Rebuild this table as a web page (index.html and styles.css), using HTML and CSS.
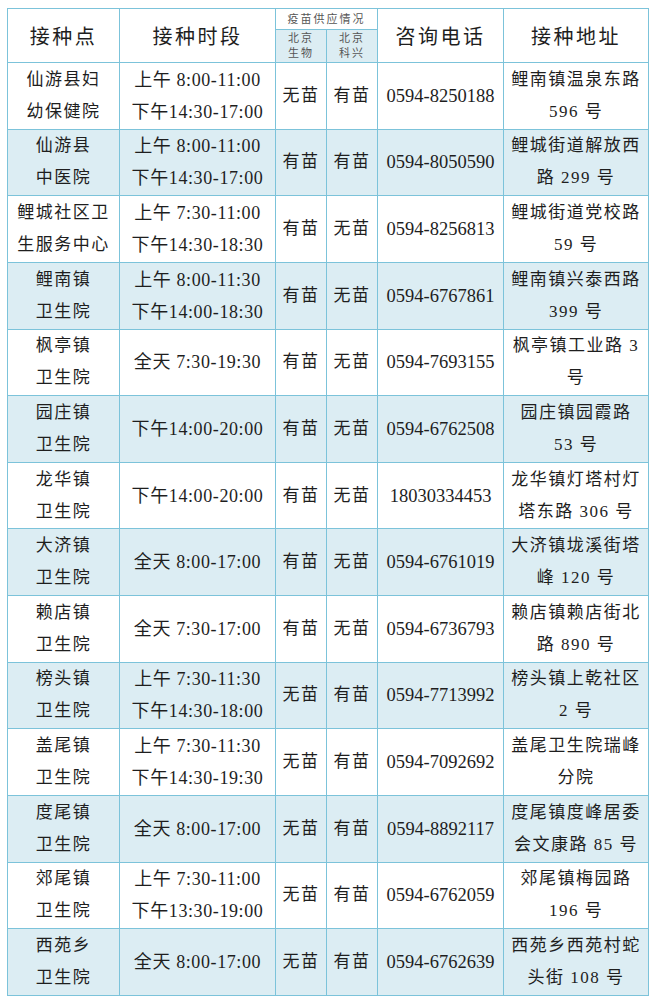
FILE: index.html
```html
<!DOCTYPE html>
<html lang="zh-CN">
<head>
<meta charset="utf-8">
<title>接种点</title>
<link rel="stylesheet" href="styles.css">
</head>
<body>
<div class="wrap">
<table class="vac">
<colgroup>
<col class="c1"><col class="c2"><col class="c3"><col class="c4"><col class="c5"><col class="c6">
</colgroup>
<thead>
<tr class="h1">
<th rowspan="2" class="big">接种点</th>
<th rowspan="2" class="big">接种时段</th>
<th colspan="2" class="sup">疫苗供应情况</th>
<th rowspan="2" class="big">咨询电话</th>
<th rowspan="2" class="big">接种地址</th>
</tr>
<tr class="h2">
<th class="sub">北京<br>生物</th>
<th class="sub">北京<br>科兴</th>
</tr>
</thead>
<tbody>
<tr><td>仙游县妇<br>幼保健院</td><td class="t">上午 8:00-11:00<br>下午14:30-17:00</td><td>无苗</td><td>有苗</td><td class="p">0594-8250188</td><td>鲤南镇温泉东路<br>596 号</td></tr>
<tr class="alt"><td>仙游县<br>中医院</td><td class="t">上午 8:00-11:00<br>下午14:30-17:00</td><td>有苗</td><td>有苗</td><td class="p">0594-8050590</td><td>鲤城街道解放西<br>路 299 号</td></tr>
<tr><td>鲤城社区卫<br>生服务中心</td><td class="t">上午 7:30-11:00<br>下午14:30-18:30</td><td>有苗</td><td>无苗</td><td class="p">0594-8256813</td><td>鲤城街道党校路<br>59 号</td></tr>
<tr class="alt"><td>鲤南镇<br>卫生院</td><td class="t">上午 8:00-11:30<br>下午14:00-18:30</td><td>有苗</td><td>无苗</td><td class="p">0594-6767861</td><td>鲤南镇兴泰西路<br>399 号</td></tr>
<tr><td>枫亭镇<br>卫生院</td><td class="t">全天 7:30-19:30</td><td>有苗</td><td>无苗</td><td class="p">0594-7693155</td><td>枫亭镇工业路 3<br>号</td></tr>
<tr class="alt"><td>园庄镇<br>卫生院</td><td class="t">下午14:00-20:00</td><td>有苗</td><td>无苗</td><td class="p">0594-6762508</td><td>园庄镇园霞路<br>53 号</td></tr>
<tr><td>龙华镇<br>卫生院</td><td class="t">下午14:00-20:00</td><td>有苗</td><td>无苗</td><td class="p">18030334453</td><td>龙华镇灯塔村灯<br>塔东路 306 号</td></tr>
<tr class="alt"><td>大济镇<br>卫生院</td><td class="t">全天 8:00-17:00</td><td>有苗</td><td>无苗</td><td class="p">0594-6761019</td><td>大济镇垅溪街塔<br>峰 120 号</td></tr>
<tr><td>赖店镇<br>卫生院</td><td class="t">全天 7:30-17:00</td><td>有苗</td><td>无苗</td><td class="p">0594-6736793</td><td>赖店镇赖店街北<br>路 890 号</td></tr>
<tr class="alt"><td>榜头镇<br>卫生院</td><td class="t">上午 7:30-11:30<br>下午14:30-18:00</td><td>无苗</td><td>有苗</td><td class="p">0594-7713992</td><td>榜头镇上乾社区<br>2 号</td></tr>
<tr><td>盖尾镇<br>卫生院</td><td class="t">上午 7:30-11:30<br>下午14:30-19:30</td><td>无苗</td><td>有苗</td><td class="p">0594-7092692</td><td>盖尾卫生院瑞峰<br>分院</td></tr>
<tr class="alt"><td>度尾镇<br>卫生院</td><td class="t">全天 8:00-17:00</td><td>无苗</td><td>有苗</td><td class="p">0594-8892117</td><td>度尾镇度峰居委<br>会文康路 85 号</td></tr>
<tr><td>郊尾镇<br>卫生院</td><td class="t">上午 7:30-11:00<br>下午13:30-19:00</td><td>无苗</td><td>有苗</td><td class="p">0594-6762059</td><td>郊尾镇梅园路<br>196 号</td></tr>
<tr class="alt"><td>西苑乡<br>卫生院</td><td class="t">全天 8:00-17:00</td><td>无苗</td><td>有苗</td><td class="p">0594-6762639</td><td>西苑乡西苑村蛇<br>头街 108 号</td></tr>
</tbody>
</table>
</div>
</body>
</html>
```

FILE: styles.css
```css
html, body {
  margin: 0;
  padding: 0;
  background: #ffffff;
}
.wrap {
  padding: 8px 0 0 7px;
}
.vac {
  border-collapse: collapse;
  table-layout: fixed;
  width: 641px;
  font-family: "Liberation Serif", "Noto Sans CJK SC", serif;
  color: #1e1e1e;
}
.c1 { width: 112px; }
.c2 { width: 156px; }
.c3 { width: 51px; }
.c4 { width: 51px; }
.c5 { width: 126px; }
.c6 { width: 145px; }
.vac th, .vac td {
  border: 1.5px solid #7cc3da;
  padding: 0;
  text-align: center;
  vertical-align: middle;
  font-weight: normal;
}
.h1 { height: 21px; }
.h2 { height: 33px; }
.big {
  font-size: 20px;
  letter-spacing: 2.5px;
  padding-left: 2px;
}
.sup {
  font-size: 11px;
  letter-spacing: 2px;
  color: #555555;
  line-height: 14px;
}
.sub {
  font-size: 11px;
  letter-spacing: 2px;
  color: #555555;
  line-height: 15px;
  background: #dcedf3;
}
.vac tbody tr {
  height: 66.64px;
}
.vac td {
  font-size: 17px;
  letter-spacing: 1.5px;
  line-height: 32px;
}
.vac td.t {
  font-size: 18px;
  letter-spacing: 0.6px;
}
.vac td.p {
  font-size: 18.5px;
  letter-spacing: 0;
}
.alt td {
  background: #dcedf3;
}
```
